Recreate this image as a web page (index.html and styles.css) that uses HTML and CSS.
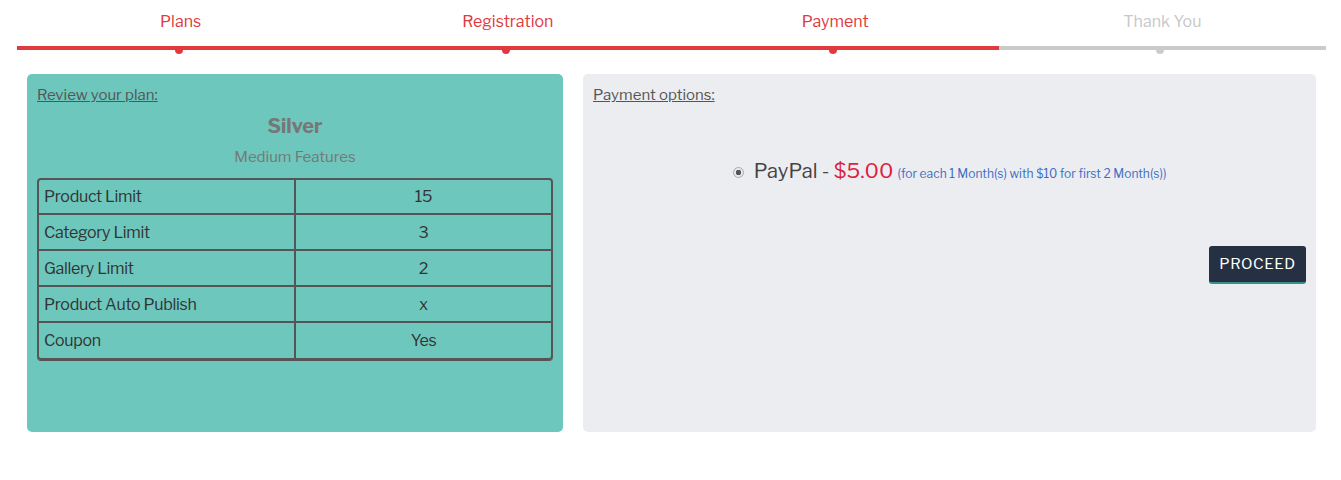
FILE: index.html
```html
<!DOCTYPE html>
<html lang="en">
<head>
<meta charset="utf-8">
<title>Checkout</title>
<link rel="stylesheet" href="styles.css">
</head>
<body>
<div class="stepper">
  <div class="step done"><div class="step-label">Plans</div><div class="step-bar"></div></div>
  <div class="step done"><div class="step-label">Registration</div><div class="step-bar"></div></div>
  <div class="step done"><div class="step-label">Payment</div><div class="step-bar"></div></div>
  <div class="step"><div class="step-label">Thank You</div><div class="step-bar"></div></div>
</div>

<div class="cards">
  <section class="card card-plan">
    <div class="card-title">Review your plan:</div>
    <div class="plan-name">Silver</div>
    <div class="plan-desc">Medium Features</div>
    <div class="plan-table-wrap">
      <table class="plan-table">
        <tr><td>Product Limit</td><td>15</td></tr>
        <tr><td>Category Limit</td><td>3</td></tr>
        <tr><td>Gallery Limit</td><td>2</td></tr>
        <tr><td>Product Auto Publish</td><td>x</td></tr>
        <tr><td>Coupon</td><td>Yes</td></tr>
      </table>
    </div>
  </section>
  <section class="card card-pay">
    <div class="card-title">Payment options:</div>
    <div class="pay-option">
      <span class="radio"></span>
      <span class="pay-name">PayPal - </span><span class="pay-price">$5.00</span>
      <span class="pay-note">(for each 1 Month(s) with $10 for first 2 Month(s))</span>
    </div>
    <div class="pay-actions">
      <button class="btn-proceed">PROCEED</button>
    </div>
  </section>
</div>
</body>
</html>
```

FILE: styles.css
```css
* { box-sizing: border-box; }
body {
  margin: 0;
  background: #fff;
  font-family: "Libre Franklin", Roboto, "Liberation Sans", sans-serif;
  color: #333;
}
.stepper {
  display: flex;
  margin: 0 15px 0 17px;
}
.step { flex: 1; position: relative; }
.step-label {
  text-align: center;
  font-size: 16px;
  line-height: 24px;
  padding-top: 10px;
  height: 46px;
  color: #c8c8c8;
}
.step.done .step-label { color: #e03a3e; }
.step-bar {
  height: 4px;
  background: #cacaca;
  position: relative;
}
.step.done .step-bar { background: #e03a3e; }
.step-bar::after {
  content: "";
  position: absolute;
  left: calc(50% - 6px);
  top: 0;
  width: 8px;
  height: 8px;
  border-radius: 50%;
  background: inherit;
}
.cards {
  display: grid;
  grid-template-columns: 536px 733px;
  column-gap: 20px;
  margin: 24px 0 0 27px;
}
.card {
  height: 358px;
  border-radius: 5px;
  padding: 11px 10px 10px;
}
.card-plan { background: #6dc7bd; }
.card-pay { background: #ecedf1; }
.card-title {
  font-size: 15px;
  line-height: 20px;
  color: #555;
  text-decoration: underline;
}
.plan-name {
  text-align: center;
  font-weight: bold;
  font-size: 20px;
  line-height: 28px;
  margin-top: 7px;
  color: #777;
}
.plan-desc {
  text-align: center;
  font-size: 15px;
  line-height: 20px;
  margin-top: 7px;
  color: #777;
}
.plan-table-wrap {
  margin-top: 11px;
  border: 2px solid #555;
  border-radius: 4px;
  overflow: hidden;
  box-shadow: 0 1px 0 #555;
}
.plan-table {
  width: 100%;
  border-collapse: collapse;
  font-size: 16px;
  letter-spacing: -0.3px;
  color: #333;
}
.plan-table td {
  height: 36px;
  padding: 0 5px;
  border-top: 2px solid #555;
  width: 50%;
}
.plan-table tr:first-child td { border-top: 0; height: 34px; }
.plan-table td + td {
  border-left: 2px solid #555;
  text-align: center;
}
.pay-option {
  margin-top: 51px;
  display: flex;
  align-items: baseline;
  justify-content: center;
  line-height: 30px;
  white-space: pre;
}
.radio {
  align-self: center;
  width: 11px;
  height: 11px;
  border-radius: 50%;
  border: 1px solid #aaa;
  background: radial-gradient(circle, #555 0 2.5px, #e8e8e8 3px);
  margin-right: 10px;
  margin-top: -1px;
}
.pay-name { font-size: 20px; color: #444; }
.pay-price { font-size: 21px; color: #dc1f42; margin-right: 4px; }
.pay-note { font-size: 12px; color: #3d6cc4; }
.pay-actions {
  display: flex;
  justify-content: flex-end;
  margin-top: 57px;
}
.btn-proceed {
  font-family: inherit;
  background: #253042;
  color: #fff;
  border: 0;
  border-bottom: 2px solid #3a8f8a;
  border-radius: 3px;
  height: 38px;
  width: 97px;
  font-size: 15px;
  letter-spacing: 0.6px;
  font-weight: 400;
}
```
